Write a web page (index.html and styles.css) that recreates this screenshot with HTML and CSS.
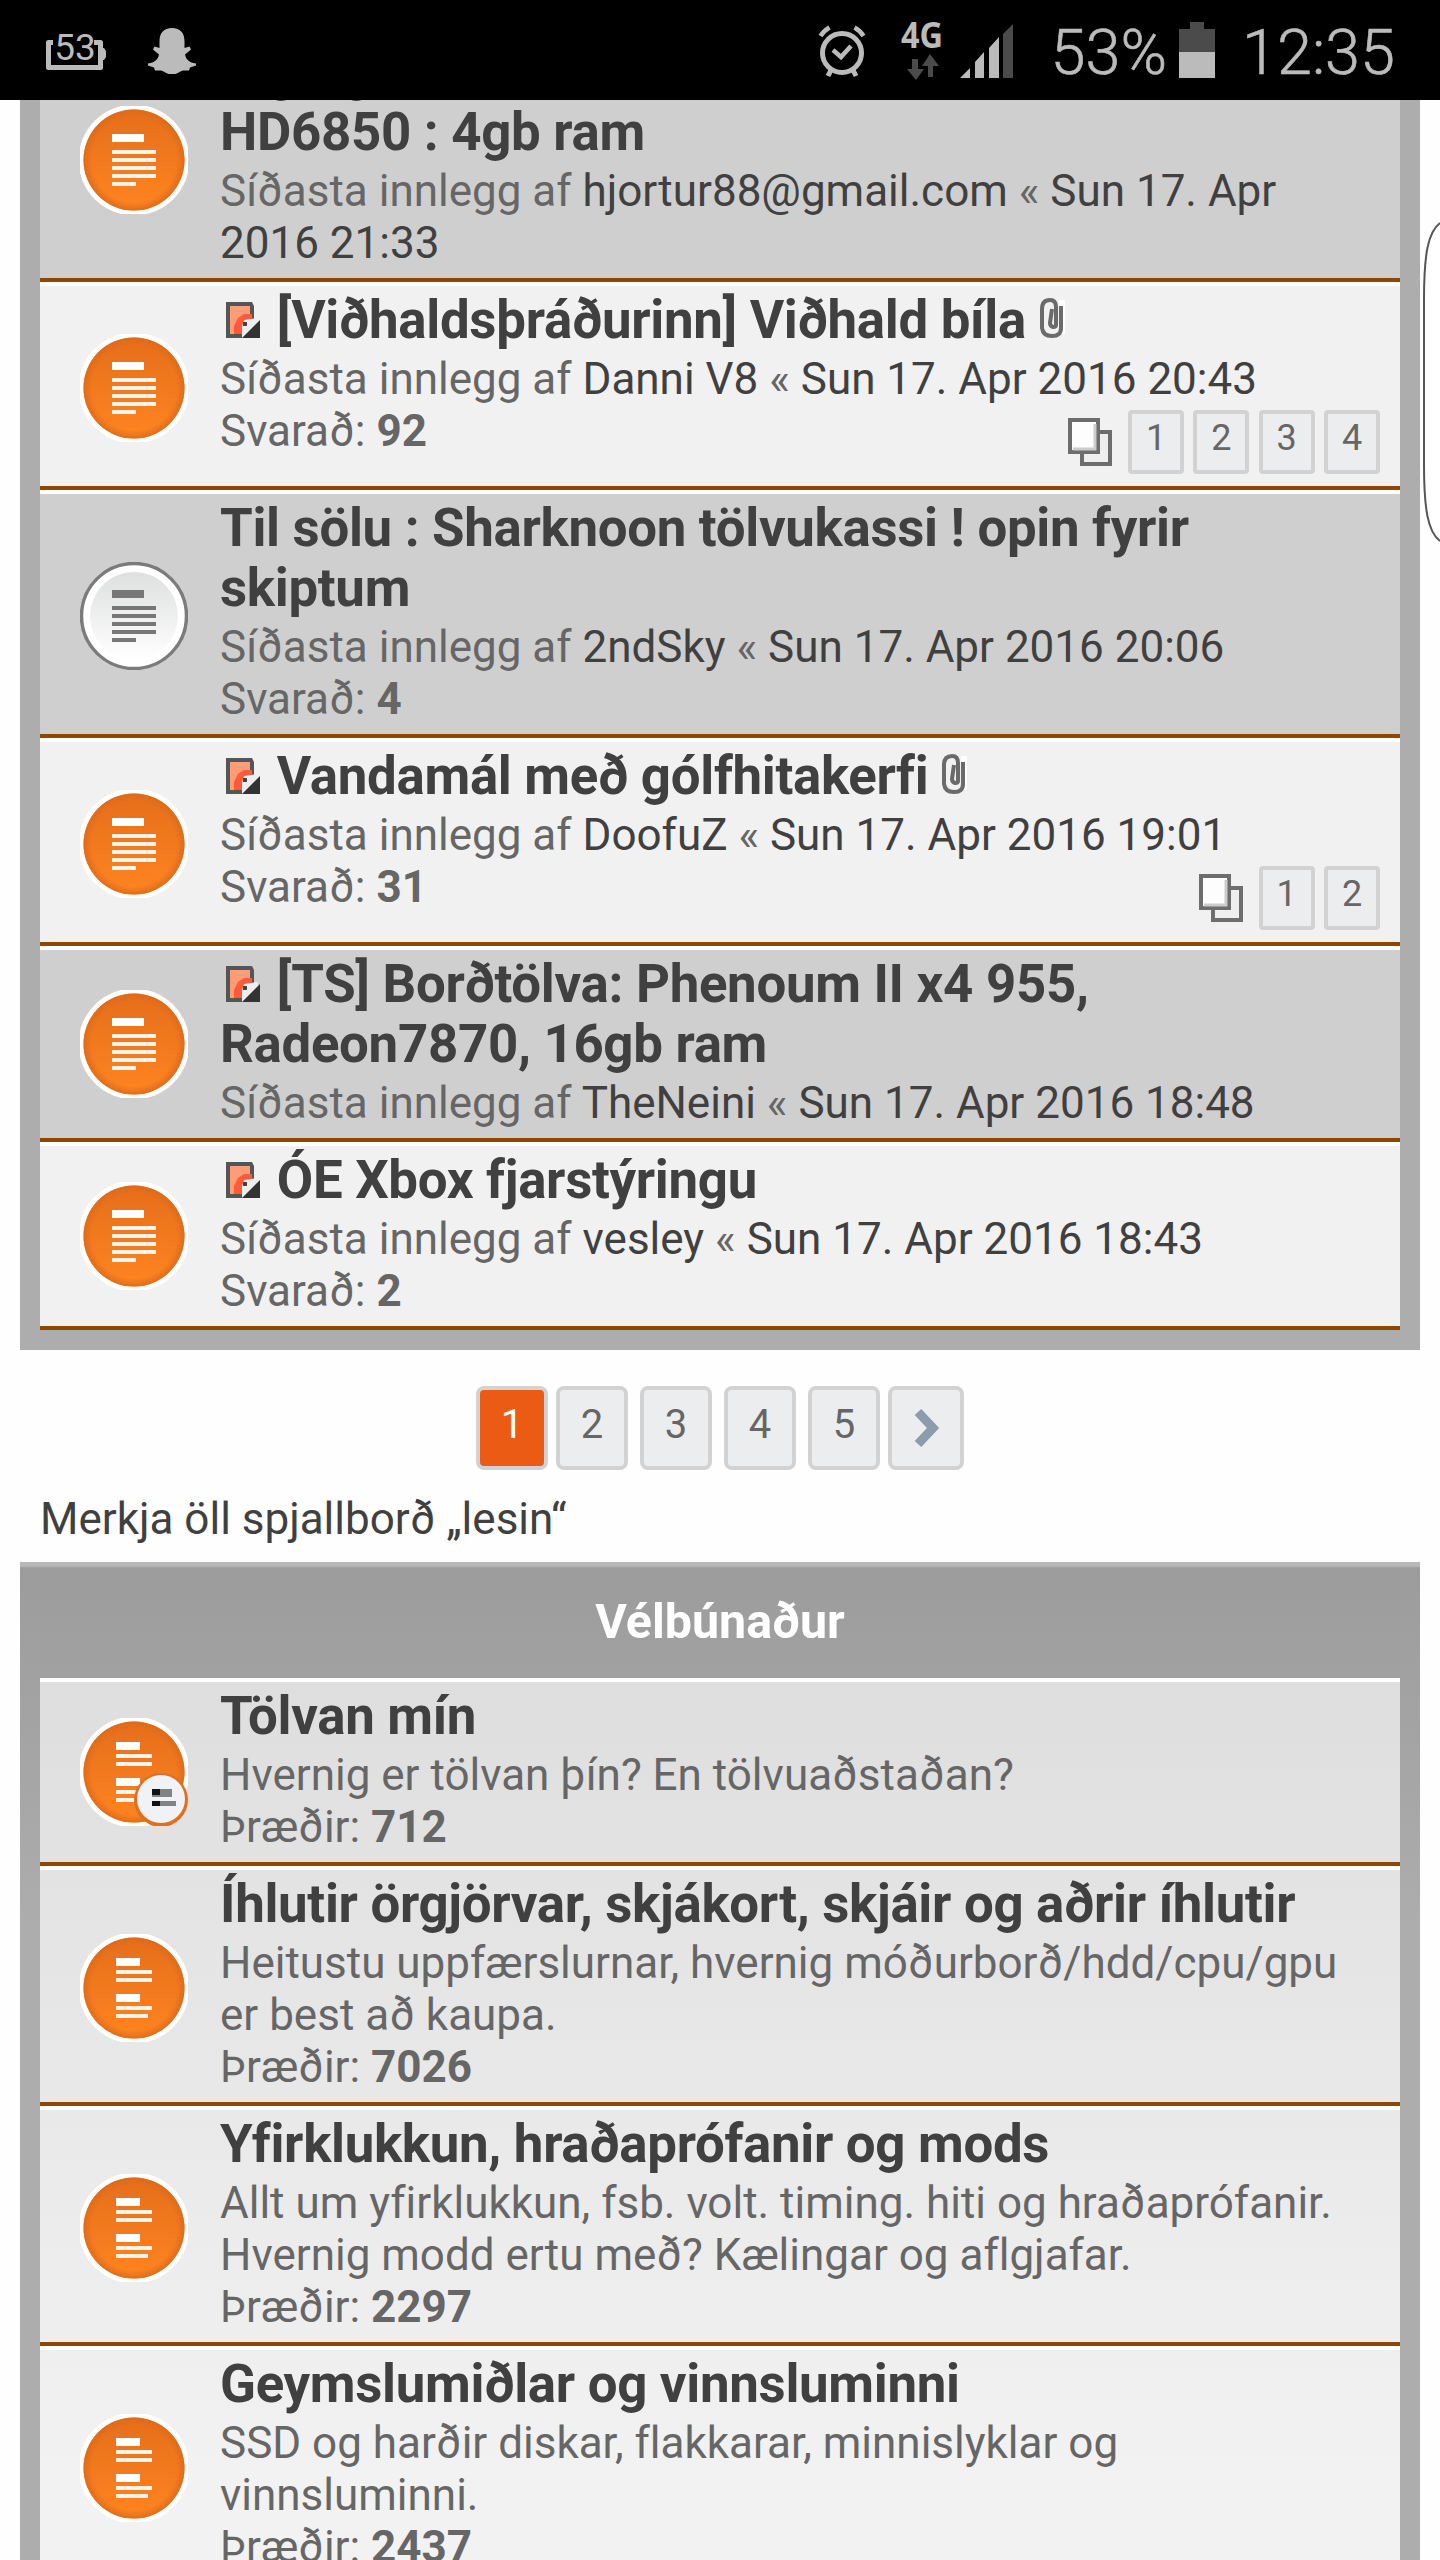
FILE: index.html
```html
<!DOCTYPE html>
<html lang="is">
<head>
  <meta charset="UTF-8" />
  <title>Spjallborð</title>
  <link rel="stylesheet" href="styles.css">
</head>
<body>

<svg class="defs" width="0" height="0">
  <defs>
    <linearGradient id="orange" x1="0" y1="0" x2="0" y2="1">
      <stop offset="0" stop-color="#e56e1b"/>
      <stop offset="1" stop-color="#ff8420"/>
    </linearGradient>
    <radialGradient id="rim">
      <stop offset=".84" stop-color="#dd6a1a" stop-opacity="0"/>
      <stop offset="1" stop-color="#dd6a1a" stop-opacity=".9"/>
    </radialGradient>
    <linearGradient id="grey" x1="0" y1="0" x2="0" y2="1">
      <stop offset="0" stop-color="#dedfdf"/>
      <stop offset="1" stop-color="#ffffff"/>
    </linearGradient>
    <symbol id="topic-unread" viewBox="0 0 108 108">
      <circle cx="54" cy="54" r="55.5" fill="#fff"/>
      <circle cx="54" cy="54" r="50.5" fill="url(#orange)"/>
      <circle cx="54" cy="54" r="50.5" fill="url(#rim)"/>
      <path d="M32 28h32v8H32z" fill="#fff"/>
      <path d="M32 44h44v4H32zM32 52h44v4H32zM32 60h44v4H32zM32 68h44v4H32zM32 76h24v4H32z" fill="#fff3ea"/>
    </symbol>
    <symbol id="topic-read" viewBox="0 0 108 108">
      <circle cx="54" cy="54" r="52.5" fill="#fff" stroke="#7b7b7b" stroke-width="3.5"/>
      <circle cx="54" cy="54" r="44" fill="url(#grey)"/>
      <path d="M32 28h32v8H32zM32 44h44v4H32zM32 52h44v4H32zM32 60h44v4H32zM32 68h44v4H32zM32 76h24v4H32z" fill="#777"/>
    </symbol>
    <symbol id="forum-unread" viewBox="0 0 108 108">
      <circle cx="54" cy="54" r="55.5" fill="#fff"/>
      <circle cx="54" cy="54" r="50.5" fill="url(#orange)"/>
      <circle cx="54" cy="54" r="50.5" fill="url(#rim)"/>
      <path d="M36 24h24v8H36zM36 60h24v8H36z" fill="#fff"/>
      <path d="M36 36h36v4H36zM36 44h36v4H36zM36 72h36v4H36zM36 80h32v4H36z" fill="#fff3ea"/>
    </symbol>
    <symbol id="subforum-unread" viewBox="0 0 108 108">
      <use href="#forum-unread"/>
      <circle cx="81" cy="82" r="27" fill="#e0701f"/>
      <circle cx="81" cy="81" r="24" fill="#f0f2f5"/>
      <path d="M72 71h20v8H72zM72 83h24v5H72z" fill="#808285"/>
      <path d="M72 71h8v6h-8zM72 83h8v5h-8z" fill="#111"/>
    </symbol>
    <symbol id="newest" viewBox="0 0 44 36">
      <path d="M6 0h26l2 4v14H22v18H6z" fill="#555"/>
      <path d="M10 4h20v8L18 32h-8z" fill="#ff9b75"/>
      <path d="M24 12h8v6l-8 4-2 10h-8V24l4-8z" fill="#ff5a3c"/>
      <path d="M24 18l14-2v20H22V24z" fill="#eee"/>
      <path d="M40 18v18H22z" fill="#333"/>
      <path d="M23 20h4v4h-4z" fill="#444"/>
    </symbol>
    <symbol id="attach" viewBox="0 0 28 40">
      <path d="M20 2h6v34h-6z" fill="#fff"/>
      <path d="M22 8v22q0 8-9 8t-10-8V11Q3 2 11 2q6 0 6 7v18q0 2-3 2-3-1-3-4l2-14" fill="none" stroke="#6a6a6a" stroke-width="4"/>
    </symbol>
    <symbol id="pages" viewBox="0 0 44 48">
      <path d="M14 14h28v32H14z" fill="#eee" stroke="#6d6d6d" stroke-width="4"/>
      <path d="M2 2h28v32H2z" fill="#fdfdfd" stroke="#6d6d6d" stroke-width="4"/>
      <path d="M5 31h22V6" fill="none" stroke="#ccc" stroke-width="3"/>
    </symbol>
  </defs>
</svg>

<header class="statusbar">
  <div class="notifications">
    <svg class="battery-level" width="62" height="56" viewBox="0 0 62 56">
      <path d="M8 24.500H3.500v25h52v-25H49" fill="none" stroke="#bbb" stroke-width="5" stroke-linejoin="round"/>
      <path d="M57 30h2l2 3v6l-2 3h-2z" fill="#bbb"/>
      <text x="30" y="41.500" text-anchor="middle" font-size="37">53</text>
    </svg>
    <svg class="ghost" width="48" height="46" viewBox="0 0 48 46">
      <path d="M24 0c8 0 12.500 5 12.500 13v7l5-1.500 1.500 3-6 5c1 5 4 8 11 9v2l-6 2-1 3h-6c-4 1-6 4-11 4s-7-3-11-4H7l-1-3-6-2v-2c7-1 10-4 11-9l-6-5 1.500-3 5 1.500v-7C11.500 5 16 0 24 0z" fill="#bbb"/>
    </svg>
  </div>
  <div class="system">
    <svg class="alarm" width="48" height="54" viewBox="0 0 48 54">
      <g fill="none" stroke="#bbb" stroke-width="5">
        <circle cx="24" cy="28" r="19.500"/>
        <path d="M2.500 11q3-5 9-8.500M45.500 11q-3-5-9-8.500M15 25l8 7 10-11" stroke-width="4.500"/>
        <path d="M13 45l-3 6M35 45l3 6"/>
      </g>
    </svg>
    <svg class="network" width="44" height="60" viewBox="0 0 44 60">
      <text x="22" y="26" text-anchor="middle" textLength="42" lengthAdjust="spacingAndGlyphs" font-size="35">4G</text>
      <path d="M12 37h6v10h6l-8 11-9-11h5zM28 55V44h-6l8-12 9 12h-6v11z" fill="#4b4b4b"/>
    </svg>
    <svg class="signal" width="53" height="54" viewBox="0 0 53 54">
      <path d="M0 54l10-10v10zM15 54V38l9-10v26zM29 54V24l10-11v41z" fill="#bbb"/>
      <path d="M43 54V10L53 0v54z" fill="#4b4b4b"/>
    </svg>
    <span class="percent">53%</span>
    <svg class="battery" width="36" height="56" viewBox="0 0 36 56">
      <path d="M0 7h11V0h14v7h11v23H0z" fill="#4b4b4b"/>
      <path d="M0 30h36v26H0z" fill="#bbb"/>
    </svg>
    <span class="clock">12:35</span>
  </div>
</header>

<main class="viewport">
  <section class="forumbg topics">
    <ul>
      <li class="row bg2">
        <svg class="icon"><use href="#topic-unread"/></svg>
        <div class="text">
          <h3>Big rig tölva : AMD Phenom,<br>HD6850 : 4gb ram</h3>
          <p>Síðasta innlegg af <a>hjortur88@gmail.com</a> « <a>Sun 17. Apr 2016 21:33</a></p>
        </div>
      </li>
      <li class="row bg1">
        <svg class="icon"><use href="#topic-unread"/></svg>
        <div class="text">
          <h3><svg class="new"><use href="#newest"/></svg> [Viðhaldsþráðurinn] Viðhald bíla <svg class="clip"><use href="#attach"/></svg></h3>
          <p>Síðasta innlegg af <a>Danni V8</a> « <a>Sun 17. Apr 2016 20:43</a></p>
          <p>Svarað: <b>92</b></p>
          <div class="pages"><svg><use href="#pages"/></svg><a>1</a><a>2</a><a>3</a><a>4</a></div>
        </div>
      </li>
      <li class="row bg2">
        <svg class="icon"><use href="#topic-read"/></svg>
        <div class="text">
          <h3>Til sölu : Sharknoon tölvukassi ! opin fyrir skiptum</h3>
          <p>Síðasta innlegg af <a>2ndSky</a> « <a>Sun 17. Apr 2016 20:06</a></p>
          <p>Svarað: <b>4</b></p>
        </div>
      </li>
      <li class="row bg1">
        <svg class="icon"><use href="#topic-unread"/></svg>
        <div class="text">
          <h3><svg class="new"><use href="#newest"/></svg> Vandamál með gólfhitakerfi <svg class="clip"><use href="#attach"/></svg></h3>
          <p>Síðasta innlegg af <a>DoofuZ</a> « <a>Sun 17. Apr 2016 19:01</a></p>
          <p>Svarað: <b>31</b></p>
          <div class="pages"><svg><use href="#pages"/></svg><a>1</a><a>2</a></div>
        </div>
      </li>
      <li class="row bg2 short">
        <svg class="icon"><use href="#topic-unread"/></svg>
        <div class="text">
          <h3><svg class="new"><use href="#newest"/></svg> [TS] Borðtölva: Phenoum II x4 955, Radeon7870, 16gb ram</h3>
          <p>Síðasta innlegg af <a>TheNeini</a> « <a>Sun 17. Apr 2016 18:48</a></p>
        </div>
      </li>
      <li class="row bg1 short">
        <svg class="icon"><use href="#topic-unread"/></svg>
        <div class="text">
          <h3><svg class="new"><use href="#newest"/></svg> ÓE Xbox fjarstýringu</h3>
          <p>Síðasta innlegg af <a>vesley</a> « <a>Sun 17. Apr 2016 18:43</a></p>
          <p>Svarað: <b>2</b></p>
        </div>
      </li>
    </ul>
  </section>

  <nav class="pagination">
    <a class="active">1</a><a>2</a><a>3</a><a>4</a><a>5</a><a class="next"><svg width="28" height="40" viewBox="0 0 28 40"><path d="M4 4l15 16L4 36" fill="none" stroke="#8c9cac" stroke-width="9"/></svg></a>
  </nav>

  <p class="markread">Merkja öll spjallborð „lesin“</p>

  <section class="forabg">
    <h2>Vélbúnaður</h2>
    <ul>
      <li class="row short">
        <svg class="icon"><use href="#subforum-unread"/></svg>
        <div class="text">
          <h3>Tölvan mín</h3>
          <p>Hvernig er tölvan þín? En tölvuaðstaðan?</p>
          <p>Þræðir: <b>712</b></p>
        </div>
      </li>
      <li class="row">
        <svg class="icon"><use href="#forum-unread"/></svg>
        <div class="text">
          <h3>Íhlutir örgjörvar, skjákort, skjáir og aðrir íhlutir</h3>
          <p>Heitustu uppfærslurnar, hvernig móðurborð/hdd/cpu/gpu er best að kaupa.</p>
          <p>Þræðir: <b>7026</b></p>
        </div>
      </li>
      <li class="row">
        <svg class="icon"><use href="#forum-unread"/></svg>
        <div class="text">
          <h3>Yfirklukkun, hraðaprófanir og mods</h3>
          <p>Allt um yfirklukkun, fsb. volt. timing. hiti og hraðaprófanir. Hvernig modd ertu með? Kælingar og aflgjafar.</p>
          <p>Þræðir: <b>2297</b></p>
        </div>
      </li>
      <li class="row">
        <svg class="icon"><use href="#forum-unread"/></svg>
        <div class="text">
          <h3>Geymslumiðlar og vinnsluminni</h3>
          <p>SSD og harðir diskar, flakkarar, minnislyklar og vinnsluminni.</p>
          <p>Þræðir: <b>2437</b></p>
        </div>
      </li>
    </ul>
  </section>
</main>

<!-- edge panel handle -->
<svg class="edge-handle" width="20" height="324" viewBox="0 0 20 324">
  <path d="M20 3C8 12 4 34 4 80v164c0 46 4 68 16 77" fill="#fff" stroke="#555" stroke-width="2"/>
</svg>

</body>
</html>
```

FILE: styles.css
```css
* {
  box-sizing: border-box;
}
html, body {
  height: 2560px;
  overflow: hidden;
}
body {
  margin: 0;
  position: relative;
  background: #fefefe;
  font-family: Roboto, sans-serif;
  font-size: 44px;
  font-variant-ligatures: none;
  color: #666;
}
h2, h3, p, ul {
  margin: 0;
  padding: 0;
}
ul {
  list-style: none;
}
.defs {
  position: absolute;
}

/* status bar */
.statusbar {
  height: 100px;
  padding: 0 45px;
  background: #000;
  color: #bbb;
  display: flex;
  justify-content: space-between;
}
.statusbar text {
  fill: #bbb;
}
.notifications, .system {
  display: flex;
  align-items: flex-start;
}
.battery-level {
  margin-top: 18px;
}
.ghost {
  margin: 28px 0 0 41px;
}
.alarm {
  margin: 25px 34px 0 0;
}
.network {
  margin: 22px 16px 0 0;
}
.network text {
  font-family: "Open Sans", sans-serif;
  font-weight: 700;
}
.signal {
  margin: 24px 38px 0 0;
}
.percent, .clock {
  font-size: 63px;
  font-weight: 300;
  line-height: 74px;
  margin-top: 16px;
  -webkit-text-stroke: 0.6px #bbb;
}
.battery {
  margin: 22px 27px 0 12px;
}

/* page */
.viewport {
  height: 2460px;
  overflow: hidden;
}
.forumbg, .forabg {
  margin: 0 20px;
  padding: 0 20px 20px;
}
.forumbg {
  background: #adadad;
}
.topics {
  margin-top: -66px;
}
.row {
  display: flex;
  align-items: center;
  border-top: 4px solid #fff;
  border-bottom: 4px solid #8f4700;
  padding-left: 40px;
}
.bg1 {
  background: #f1f1f1;
}
.bg2 {
  background: #cfcfcf;
}
.icon {
  width: 108px;
  height: 108px;
  margin-top: 4px;
  flex: none;
}
.short .icon {
  margin-top: 0;
}
.text {
  flex: 1;
  margin-left: 32px;
  padding: 4px 20px 9px 0;
}
h3 {
  font-size: 52.8px;
  line-height: 60px;
  font-weight: 700;
  letter-spacing: -0.3px;
  color: #404040;
  margin-bottom: 3px;
}
.text p {
  line-height: 52px;
}
.text a {
  color: #404040;
}
.new {
  width: 44px;
  height: 36px;
}
.clip {
  width: 28px;
  height: 40px;
}

/* small page links inside a topic row */
.pages {
  display: flex;
  justify-content: flex-end;
  align-items: center;
  gap: 9.3px;
  height: 64px;
  margin: -47px 0 3px;
}
.pages svg {
  width: 44px;
  height: 48px;
  margin-right: 6.5px;
}
.text .pages a {
  width: 56px;
  height: 64px;
  border: 4px solid #d2d2d2;
  border-radius: 4px;
  background: #ecedee;
  color: #666;
  font-size: 36px;
  line-height: 49px;
  text-align: center;
}

/* pagination */
.pagination {
  display: flex;
  justify-content: center;
  gap: 12px;
  margin-top: 36px;
}
.pagination a {
  width: 72px;
  height: 84px;
  border: 4px solid #d2d2d2;
  border-radius: 8px;
  background: #ecedef;
  font-size: 40px;
  line-height: 69px;
  text-align: center;
}
.pagination .active {
  margin-right: -4px;
  background: #ec5b13;
  color: #fff;
}
.pagination .next {
  width: 76px;
  margin-left: -4px;
  padding-left: 4px;
  display: flex;
  align-items: center;
  justify-content: center;
}
.markread {
  margin: 23px 40px 17px;
  line-height: 52px;
  color: #404040;
}

/* category */
.forabg {
  background: linear-gradient(#b8b8b8, #b8b8b8 4px, #9c9c9c 6px, #adadad 368px);
}
h2 {
  height: 116px;
  padding-top: 32px;
  line-height: 56px;
  font-size: 48.4px;
  font-weight: 700;
  color: #fff;
  text-align: center;
}
.forabg ul {
  background: linear-gradient(#dedede, #f2f2f2 796px);
}

.edge-handle {
  position: absolute;
  right: 0;
  top: 220px;
}
```
